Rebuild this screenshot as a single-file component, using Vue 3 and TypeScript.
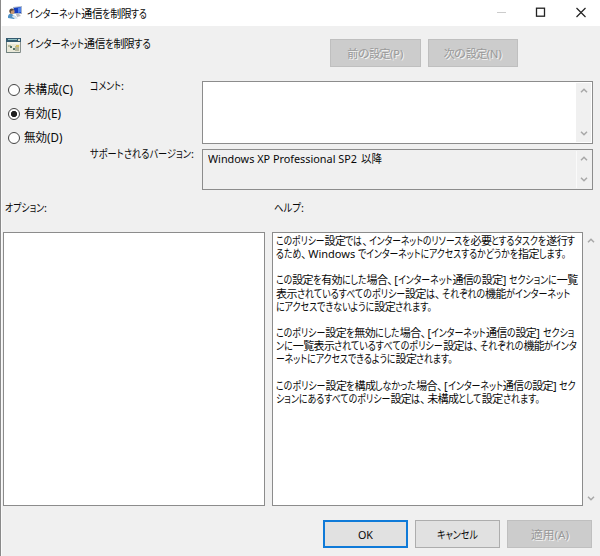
<script setup lang="ts">
import { ref } from 'vue'

type Kind = 'kana' | 'kanji' | 'latin' | 'comma'

interface Run {
  text: string
  kind: Kind
}

interface Line {
  text: string
  width: number
}

const state = ref('enabled')

const states = [
  { id: 'none', label: '未構成(C)', width: 49 },
  { id: 'enabled', label: '有効(E)', width: 37 },
  { id: 'disabled', label: '無効(D)', width: 38.5 },
]

const paragraphs: Line[][] = [
  [
    { text: 'このポリシー設定では、インターネットのリソースを必要とするタスクを遂行す', width: 299 },
    { text: 'るため、Windows でインターネットにアクセスするかどうかを指定します。', width: 290 },
  ],
  [
    { text: 'この設定を有効にした場合、[インターネット通信の設定] セクションに一覧', width: 301.5 },
    { text: '表示されているすべてのポリシー設定は、それぞれの機能がインターネット', width: 294 },
    { text: 'にアクセスできないように設定されます。', width: 156 },
  ],
  [
    { text: 'このポリシー設定を無効にした場合、[インターネット通信の設定] セクショ', width: 298 },
    { text: 'ンに一覧表示されているすべてのポリシー設定は、それぞれの機能がインタ', width: 301 },
    { text: 'ーネットにアクセスできるように設定されます。', width: 177 },
  ],
  [
    { text: 'このポリシー設定を構成しなかった場合、[インターネット通信の設定] セク', width: 300 },
    { text: 'ションにあるすべてのポリシー設定は、未構成として設定されます。', width: 263.5 },
  ],
]

// UI fonts set kana narrower than kanji, so each label is split into runs.
function runs(text: string): Run[] {
  const parts = text.match(/、|[\u3002-\u30ff]+|[\u4e00-\u9fff]+|[\u0020-\u007e]+/g) ?? []
  return parts.map((part) => ({ text: part, kind: kindOf(part) }))
}

function kindOf(part: string): Kind {
  if (part === '、') return 'comma'
  if (/^[\u3002-\u30ff]/.test(part)) return 'kana'
  return /^[\u4e00-\u9fff]/.test(part) ? 'kanji' : 'latin'
}

// Condenses the kana runs until the line has the requested width.
const vFit = {
  mounted(el: HTMLElement, binding: { value: number }) {
    const spans = Array.from(el.children) as HTMLElement[]
    const widths = spans.map((s) => s.getBoundingClientRect().width)
    const hasKana = spans.some((s) => s.classList.contains('kana'))
    let flexible = 0
    let fixed = 0
    spans.forEach((s, i) => {
      if (!hasKana || s.classList.contains('kana')) flexible += widths[i]
      else fixed += widths[i]
    })
    const scale = (binding.value - fixed) / flexible
    spans.forEach((s, i) => {
      if (hasKana && !s.classList.contains('kana')) return
      s.style.transform = `scaleX(${scale})`
      s.style.marginRight = `${widths[i] * (scale - 1)}px`
    })
  },
}
</script>

<template>
  <div class="window">
    <header class="titlebar">
      <svg class="app-icon" viewBox="0 0 15 14">
        <path d="M5 1 14 0v8L5 8Z" fill="#a9b5cb" />
        <path d="M6 2 13 1v6L6 7Z" fill="#173fc0" />
        <path d="M10 2 13 1v5l-3 1Z" fill="#4e83ec" />
        <path d="M8 8h3l2 2-4 1Z" fill="#b7b9bf" />
        <circle cx="4" cy="5.5" r="2.6" fill="#c99b72" />
        <path d="M1.4 5.5C1 2 5 1.7 6 4L3 5v3Z" fill="#5b4c42" />
        <path d="M0 10q1-3 4-2l4 3-2 2-6-1Z" fill="#4f91c5" />
        <path d="m5 9 5 3-2 1-4-2Z" fill="#d8e5ee" />
      </svg>
      <h1 v-fit="120" class="txt title"><span v-for="(r, i) in runs('インターネット通信を制限する')" :key="i" class="run" :class="r.kind">{{ r.text }}</span></h1>
      <svg class="controls" viewBox="0 0 96 14">
        <path d="M1 7.5h9" stroke="#ccc" fill="none" />
        <rect x="40.5" y="3.2" width="8" height="8" fill="none" stroke="#222" stroke-width="1.3" />
        <path d="m80.5 3 9 9m0-9-9 9" fill="none" stroke="#222" stroke-width="1.2" />
      </svg>
    </header>

    <section class="heading">
      <svg class="policy-icon" viewBox="0 0 15 15">
        <path d="M.5.5h14v14H.5Z" fill="#e9e8d9" stroke="#89918f" />
        <path d="M0 0h15v4H0Z" fill="#355b70" />
        <path d="M2 1.5h9" stroke="#8fc0c4" />
        <path d="M12 1h2v2h-2Z" fill="#d7ddd0" />
        <path d="M1 5h13" stroke="#fff" />
        <path d="M2 7h3v2H2ZM9 8h4v5H9Z" fill="#b6b89f" />
        <path d="M4 8h2v2H4Zm3 2h2v2H7Z" fill="#58766b" />
        <path d="M10 7h3v2h-3Z" fill="#d5bd63" />
        <path d="M.5 4v10.5H14" stroke="#70817f" fill="none" />
      </svg>
      <h2 v-fit="124" class="txt subtitle"><span v-for="(r, i) in runs('インターネット通信を制限する')" :key="i" class="run" :class="r.kind">{{ r.text }}</span></h2>
      <div class="nav">
        <button class="btn disabled" disabled><span v-fit="56" class="txt"><span v-for="(r, i) in runs('前の設定(P)')" :key="i" class="run" :class="r.kind">{{ r.text }}</span></span></button>
        <button class="btn disabled" disabled><span v-fit="58" class="txt"><span v-for="(r, i) in runs('次の設定(N)')" :key="i" class="run" :class="r.kind">{{ r.text }}</span></span></button>
      </div>
    </section>

    <section class="form">
      <div class="radios">
        <label v-for="s in states" :key="s.id" class="radio" @click="state = s.id">
          <i class="dot" :class="{ on: state === s.id }"></i>
          <span v-fit="s.width" class="txt big"><span class="run">{{ s.label }}</span></span>
        </label>
      </div>
      <div class="fields">
        <div class="label"><span v-fit="34" class="txt"><span class="run kana">コメント</span><span class="run">:</span></span></div>
        <div class="box comment">
          <div class="value"></div>
          <div class="scroll">
            <svg viewBox="0 0 8 5"><path d="M1 4.2 4 1.2 7 4.2" /></svg>
            <svg viewBox="0 0 8 5"><path d="M1 .8 4 3.8 7 .8" /></svg>
          </div>
        </div>
        <div class="label"><span v-fit="104" class="txt"><span class="run kana">サポートされるバージョン</span><span class="run">:</span></span></div>
        <div class="box support">
          <div class="value"><span v-fit="149" class="txt"><span class="run">Windows XP Professional SP2</span></span><span v-fit="21" class="txt since"><span class="run">以降</span></span></div>
          <div class="scroll">
            <svg viewBox="0 0 8 5"><path d="M1 4.2 4 1.2 7 4.2" /></svg>
            <svg viewBox="0 0 8 5"><path d="M1 .8 4 3.8 7 .8" /></svg>
          </div>
        </div>
      </div>
    </section>

    <section class="panes">
      <div class="pane-label"><span v-fit="42" class="txt"><span class="run kana">オプション</span><span class="run">:</span></span></div>
      <div class="pane-label"><span v-fit="30" class="txt"><span class="run kana">ヘルプ</span><span class="run">:</span></span></div>
      <div class="box options"></div>
      <div class="help-area">
        <div class="box help">
          <div v-for="(p, pi) in paragraphs" :key="pi" class="para">
            <div v-for="(l, li) in p" :key="li" v-fit="l.width" class="txt line"><span v-for="(r, i) in runs(l.text)" :key="i" class="run" :class="r.kind">{{ r.text }}</span></div>
          </div>
        </div>
        <div class="scroll outer">
          <svg viewBox="0 0 8 5"><path d="M1 4.2 4 1.2 7 4.2" /></svg>
          <svg viewBox="0 0 8 5"><path d="M1 .8 4 3.8 7 .8" /></svg>
        </div>
      </div>
    </section>

    <footer class="footer">
      <button class="btn primary"><span v-fit="15" class="txt"><span class="run">OK</span></span></button>
      <button class="btn"><span v-fit="41" class="txt"><span class="run kana">キャンセル</span></span></button>
      <button class="btn disabled" disabled><span v-fit="38" class="txt"><span class="run">適用(A)</span></span></button>
    </footer>
  </div>
</template>

<style>
body {
  margin: 0;
  background: #f0f0f0;
}
</style>

<style scoped>
* {
  box-sizing: border-box;
}
.window {
  width: 600px;
  height: 556px;
  display: flex;
  flex-direction: column;
  background: #f0f0f0;
  border-left: 1px solid #8a8a8a;
  box-shadow: inset 1px 0 #fafafa;
  overflow: hidden;
  color: #080808;
  font-family: "Noto Sans", "Noto Sans CJK JP", sans-serif;
  font-size: 11px;
}
.txt {
  display: block;
  margin: 0;
  white-space: pre;
  font-size: 11px;
  font-weight: 400;
  line-height: 13px;
  height: 13px;
}
.run {
  display: inline-block;
  transform-origin: 0 50%;
  line-height: 13px;
  vertical-align: top;
}
.kana {
  font-family: "Noto Sans CJK JP", sans-serif;
  font-feature-settings: "palt";
}
.kanji {
  font-family: "Noto Sans CJK JP", sans-serif;
  letter-spacing: -0.6px;
}
.comma {
  width: 7px;
  font-family: "Noto Sans CJK JP", sans-serif;
  font-feature-settings: "palt";
}
.titlebar {
  flex: none;
  height: 26px;
  background: #fff;
  display: flex;
  align-items: center;
  padding-left: 7px;
}
.app-icon {
  width: 15px;
  height: 14px;
}
.title {
  width: 130px;
  margin-left: 4px;
}
.controls {
  width: 96px;
  height: 14px;
  margin: 0 8px 2px auto;
}
.heading {
  flex: none;
  height: 55px;
  display: flex;
  align-items: flex-start;
  padding-left: 5px;
}
.policy-icon {
  width: 15px;
  height: 15px;
  margin-top: 12px;
}
.subtitle {
  width: 303px;
  margin: 11px 0 0 6px;
}
.nav {
  display: flex;
  gap: 7px;
  margin-top: 13px;
}
.btn {
  width: 85px;
  height: 28px;
  padding: 0;
  display: flex;
  justify-content: center;
  align-items: center;
  border: 1px solid #adadad;
  border-radius: 0;
  background: #e1e1e1;
  color: #080808;
  font: inherit;
}
.nav .btn {
  width: 90.5px;
}
.disabled {
  background: #ccc;
  border-color: #bfbfbf;
  color: #999;
  text-shadow: 1px 1px #f4f4f4;
}
.primary {
  border: 2px solid #0f7ad8;
}
.form {
  flex: none;
  display: grid;
  grid-template-columns: 82px 1fr;
  height: 120px;
  padding-left: 7px;
}
.radios {
  display: flex;
  flex-direction: column;
  gap: 0.3px;
  margin-top: -2.7px;
}
.radio {
  display: flex;
  align-items: center;
  height: 23.5px;
}
.dot {
  width: 12px;
  height: 12px;
  margin-right: 4px;
  border: 1px solid #444;
  border-radius: 50%;
  background: #fff;
}
.on {
  background: radial-gradient(circle, #222 0 2.8px, #fff 3.4px);
}
.big {
  font-size: 12px;
  height: 14px;
}
.fields {
  display: grid;
  grid-template-columns: 112px 391px;
  grid-template-rows: 63px 41px;
  row-gap: 5px;
}
.label {
  margin-top: -2px;
}
.box {
  display: flex;
  border: 1px solid #8c8c8c;
  background: #fff;
}
.support {
  background: #f0f0f0;
}
.value {
  flex: 1;
  display: flex;
  padding: 2px 0 0 5px;
}
.since {
  margin-left: 4px;
}
.scroll {
  width: 15px;
  margin: 1px 1px;
  padding: 5px 0 6px;
  background: #f0f0f0;
  display: flex;
  flex-direction: column;
  justify-content: space-between;
  align-items: center;
}
.support .scroll {
  border-left: 1px solid #fafafa;
}
.scroll svg {
  width: 8px;
  height: 5px;
}
.scroll path {
  fill: none;
  stroke: #a8a8a8;
  stroke-width: 1.5;
}
.panes {
  flex: none;
  display: grid;
  grid-template-columns: 262px 1fr;
  grid-template-rows: 31px 274px;
  column-gap: 7px;
  padding-left: 2px;
}
.pane-label {
  padding: 0 0 0 2px;
}
.help-area {
  display: flex;
}
.help {
  display: block;
  width: 311px;
  padding: 1px 0 0 3px;
}
.line {
  height: 13.17px;
}
.para {
  margin-bottom: 13.17px;
}
.outer {
  margin: 0;
  padding: 6px 0 5px;
}
.footer {
  flex: none;
  display: flex;
  justify-content: flex-end;
  gap: 7px;
  padding: 14px 8px 0 0;
}
</style>
